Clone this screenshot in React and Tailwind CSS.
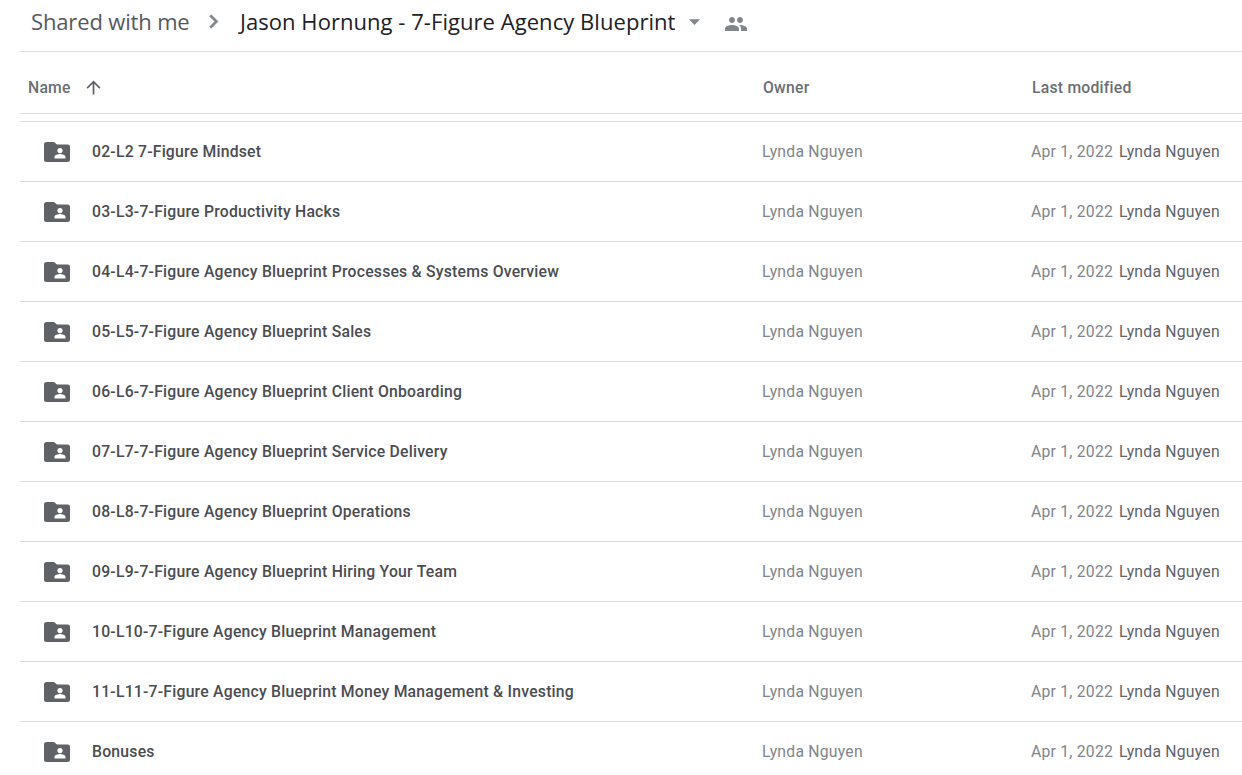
import React from 'react';

const folders = [
  '02-L2 7-Figure Mindset',
  '03-L3-7-Figure Productivity Hacks',
  '04-L4-7-Figure Agency Blueprint Processes & Systems Overview',
  '05-L5-7-Figure Agency Blueprint Sales',
  '06-L6-7-Figure Agency Blueprint Client Onboarding',
  '07-L7-7-Figure Agency Blueprint Service Delivery',
  '08-L8-7-Figure Agency Blueprint Operations',
  '09-L9-7-Figure Agency Blueprint Hiring Your Team',
  '10-L10-7-Figure Agency Blueprint Management',
  '11-L11-7-Figure Agency Blueprint Money Management & Investing',
  'Bonuses',
];

const SharedFolderIcon = () => (
  <svg width="26" height="20" viewBox="0 0 26 20" className="shrink-0">
    <path
      fill="#5f6368"
      fillRule="evenodd"
      d="M2.5 0H10l3 2.5h10.5A2.5 2.5 0 0 1 26 5v12.5a2.5 2.5 0 0 1-2.5 2.5h-21A2.5 2.5 0 0 1 0 17.5v-15A2.5 2.5 0 0 1 2.5 0ZM16 6a2.6 2.6 0 1 0 0 5.2A2.6 2.6 0 0 0 16 6Zm-5.5 10.5h11v-1.6c0-1.9-3.7-2.8-5.5-2.8s-5.5.9-5.5 2.8v1.6Z"
    />
  </svg>
);

const PeopleIcon = () => (
  <svg width="24" height="24" viewBox="0 0 24 24" fill="#80868b">
    <path d="M16 11c1.66 0 2.99-1.34 2.99-3S17.66 5 16 5s-3 1.34-3 3 1.34 3 3 3zm-8 0c1.66 0 2.99-1.34 2.99-3S9.66 5 8 5 5 6.34 5 8s1.34 3 3 3zm0 2c-2.33 0-7 1.17-7 3.5V19h14v-2.5C15 14.17 10.33 13 8 13zm8 0c-.29 0-.62.02-.97.05 1.16.84 1.97 1.97 1.97 3.45V19h6v-2.5c0-2.33-4.67-3.5-7-3.5z" />
  </svg>
);

const FolderRow = ({ name }) => (
  <div className="flex h-[60px] items-center border-b border-[#dadce0] pt-px text-[15.75px] tracking-[0.225px]">
    <div className="flex w-[741px] items-center pl-6">
      <SharedFolderIcon />
      <span className="ml-[22px] font-medium text-[#4a4d51]">{name}</span>
    </div>
    <span className="w-[269px] pl-px text-[#80868b]">Lynda Nguyen</span>
    <span className="w-[89px] pl-px text-[#80868b]">Apr 1, 2022</span>
    <span className="text-[#5f6368]">Lynda Nguyen</span>
  </div>
);

export default function App() {
  return (
    <div className="h-[775px] overflow-hidden bg-white pl-5 font-['Roboto',sans-serif]">
      {/* Breadcrumb */}
      <div className="flex h-[52px] items-center border-b border-[#dadce0] pb-[8px] pl-[11px] font-['Open_Sans',sans-serif] text-[22px]">
        <span className="w-[158px] whitespace-nowrap tracking-[-0.15px] text-[#55595e]">Shared with me</span>
        <svg width="27" height="27" viewBox="0 0 24 24" fill="#80868b" stroke="#80868b" strokeWidth="0.6" className="ml-[11px]">
          <path d="M8.59 16.59 13.17 12 8.59 7.41 10 6l6 6-6 6z" />
        </svg>
        <span className="ml-[13px] tracking-[0.05px] text-[#202124]">Jason Hornung - 7-Figure Agency Blueprint</span>
        <svg width="27" height="27" viewBox="0 0 24 24" fill="#80868b" className="ml-[6px]">
          <path d="M7 10l5 5 5-5z" />
        </svg>
        <div className="ml-[16px] mt-[4px]">
          <PeopleIcon />
        </div>
      </div>

      {/* Column headers */}
      <div className="flex h-[62px] items-center border-b border-[#dadce0] pt-[10px] text-[15.75px] font-medium tracking-[0.225px] text-[#6b6f74]">
        <div className="flex w-[743px] items-center pl-2">
          <span>Name</span>
          <svg width="21" height="21" viewBox="0 0 24 24" fill="#5f6368" className="ml-[12px]">
            <path d="M4 12l1.41 1.41L11 7.83V20h2V7.83l5.58 5.59L20 12l-8-8-8 8z" />
          </svg>
        </div>
        <span className="w-[269px]">Owner</span>
        <span>Last modified</span>
      </div>

      {/* Scrolled-off row edge */}
      <div className="h-2 border-b border-[#dadce0]" />

      {folders.map((name) => (
        <FolderRow key={name} name={name} />
      ))}
    </div>
  );
}
